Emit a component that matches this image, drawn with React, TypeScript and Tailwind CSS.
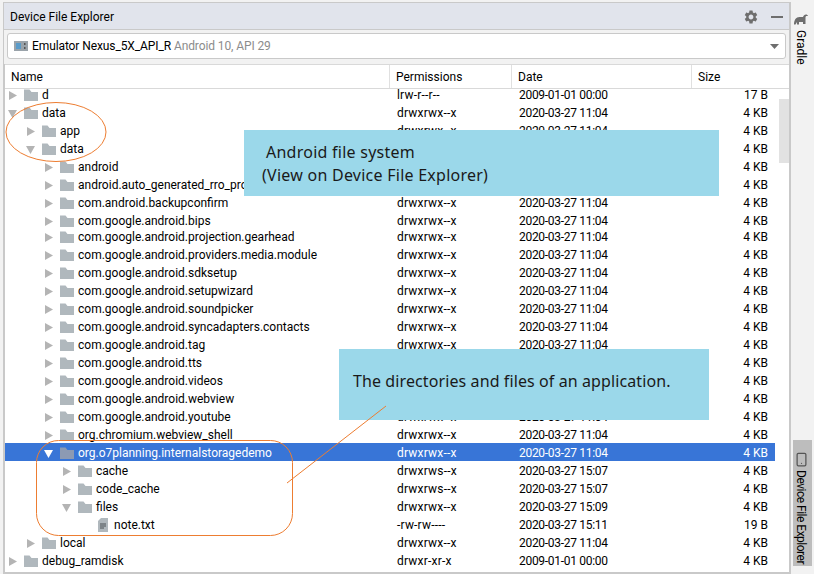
import { Smartphone } from "lucide-react";
import { MdSettings } from "react-icons/md";

type Row = {
  depth: number;
  name: string;
  perm?: string;
  date?: string;
  size?: string;
  open?: boolean;
  leaf?: boolean;
  selected?: boolean;
};

const rows: Row[] = [
  { depth: 0, name: "d", perm: "lrw-r--r--", date: "2009-01-01 00:00", size: "17 B" },
  { depth: 0, name: "data", open: true },
  { depth: 1, name: "app" },
  { depth: 1, name: "data", open: true },
  { depth: 2, name: "android" },
  { depth: 2, name: "android.auto_generated_rro_product__" },
  { depth: 2, name: "com.android.backupconfirm" },
  { depth: 2, name: "com.google.android.bips" },
  { depth: 2, name: "com.google.android.projection.gearhead" },
  { depth: 2, name: "com.google.android.providers.media.module" },
  { depth: 2, name: "com.google.android.sdksetup" },
  { depth: 2, name: "com.google.android.setupwizard" },
  { depth: 2, name: "com.google.android.soundpicker" },
  { depth: 2, name: "com.google.android.syncadapters.contacts" },
  { depth: 2, name: "com.google.android.tag" },
  { depth: 2, name: "com.google.android.tts" },
  { depth: 2, name: "com.google.android.videos" },
  { depth: 2, name: "com.google.android.webview" },
  { depth: 2, name: "com.google.android.youtube" },
  { depth: 2, name: "org.chromium.webview_shell" },
  { depth: 2, name: "org.o7planning.internalstoragedemo", open: true, selected: true },
  { depth: 3, name: "cache", perm: "drwxrws--x", date: "2020-03-27 15:07" },
  { depth: 3, name: "code_cache", perm: "drwxrws--x", date: "2020-03-27 15:07" },
  { depth: 3, name: "files", open: true, date: "2020-03-27 15:09" },
  { depth: 4, name: "note.txt", leaf: true, perm: "-rw-rw----", date: "2020-03-27 15:11", size: "19 B" },
  { depth: 1, name: "local" },
  { depth: 0, name: "debug_ramdisk", perm: "drwxr-xr-x", date: "2009-01-01 00:00" },
];

function Folder({ selected }: { selected?: boolean }) {
  return (
    <svg width="14" height="12" viewBox="0 0 14 12" className="shrink-0">
      <path d="M0 0.5h5.5l2 2.5H14v9H0z" fill={selected ? "#8c9ab3" : "#b0b8bd"} />
    </svg>
  );
}

function TextFile() {
  return (
    <svg width="10" height="14" viewBox="0 0 10 14" className="shrink-0">
      <path d="M3 0h7v14H0V3z" fill="#b0b8bd" />
      <path d="M2 6h6M2 8h6M2 10h4" stroke="#4a5055" strokeWidth="1" />
    </svg>
  );
}

function Arrow({ open, selected }: { open?: boolean; selected?: boolean }) {
  const fill = selected ? "#ffffff" : "#b4b4b4";
  return (
    <svg width="9" height="9" viewBox="0 0 9 9" className="shrink-0">
      <path d={open ? "M0 1h9L4.5 9z" : "M1 0l8 4.5L1 9z"} fill={fill} />
    </svg>
  );
}

function TreeRow({ row, slip }: { row: Row; slip?: boolean }) {
  const left = 3 + row.depth * 18;
  return (
    <div
      className={`flex h-[18px] w-[770px] items-center ${slip ? "-mt-[2px]" : ""} ${
        row.selected ? "-mt-[1px] mb-[1px] bg-[#3875d7] pt-[2px] text-white" : "text-black"
      }`}
    >
      <div className="flex w-[392px] shrink-0 items-center overflow-hidden whitespace-nowrap" style={{ paddingLeft: left }}>
        <div className="flex w-[16px] shrink-0 items-center">{!row.leaf && <Arrow open={row.open} selected={row.selected} />}</div>
        {row.leaf ? (
          <div className="ml-[2px] mr-[6px]">
            <TextFile />
          </div>
        ) : (
          <div className="mr-[4px]">
            <Folder selected={row.selected} />
          </div>
        )}
        <span>{row.name}</span>
      </div>
      <div className="w-[122px] shrink-0 tracking-[0.2px]">{row.perm ?? "drwxrwx--x"}</div>
      <div className="w-[180px] shrink-0 tracking-[-0.3px]">{row.date ?? "2020-03-27 11:04"}</div>
      <div className="w-[76px] shrink-0 pr-[7px] text-right">{row.size ?? "4 KB"}</div>
    </div>
  );
}

function HeaderCell({ label, width }: { label: string; width: string }) {
  return <div className={`flex h-full items-center border-r border-[#e0e0e0] pl-[6px] ${width}`}>{label}</div>;
}

export default function App() {
  return (
    <div className="relative flex h-[574px] w-[814px] overflow-hidden bg-[#f2f2f2] pt-[2px] font-['Roboto',sans-serif] text-[12px] text-black">
      <div className="ml-[3px] flex w-[788px] shrink-0 flex-col border-t border-r-[2px] border-b-[2px] border-l border-[#c9c9c9]">
        <div className="flex h-[26px] shrink-0 items-center justify-between bg-[#e1e4ec] pt-[1px] pr-[6px] pl-[6px]">
          <span>Device File Explorer</span>
          <div className="flex items-center gap-[12px] text-[#6e6e6e]">
            <MdSettings size={16} />
            <div className="h-[2px] w-[12px] bg-[#6e6e6e]" />
          </div>
        </div>
        <div className="h-[35px] shrink-0 border-t border-[#c9c9c9] p-[3px]">
          <div className="flex h-[26px] items-center justify-between rounded-[3px] border border-[#c9c9c9] bg-white pr-[6px] pl-[6px]">
            <div className="flex items-center gap-[4px]">
              <svg width="14" height="10" viewBox="0 0 14 10">
                <rect width="14" height="10" fill="#9aa3aa" />
                <rect x="2" y="2" width="5" height="6" fill="#5a9bc9" />
                <rect x="10" y="2" width="1.5" height="2" fill="#555" />
                <rect x="10" y="6" width="1.5" height="2" fill="#555" />
              </svg>
              <span className="tracking-[-0.1px]">
                Emulator Nexus_5X_API_R <span className="text-[#8c8c8c]">Android 10, API 29</span>
              </span>
            </div>
            <svg width="9" height="5" viewBox="0 0 9 5">
              <path d="M0 0h9L4.5 5z" fill="#6e6e6e" />
            </svg>
          </div>
        </div>
        <div className="relative min-h-0 flex-1 border-l border-[#c9c9c9] bg-white">
          <div className="flex h-[25px] items-center border-y border-[#d9d9d9] bg-white">
            <HeaderCell label="Name" width="w-[385px]" />
            <HeaderCell label="Permissions" width="w-[122px]" />
            <HeaderCell label="Date" width="w-[180px]" />
            <div className="pl-[6px]">Size</div>
          </div>
          <div className="h-[483px] overflow-hidden">
            <div className="-mt-[3px]">
              {rows.map((row, i) => (
                <TreeRow key={i} row={row} slip={i === 8} />
              ))}
            </div>
          </div>
          <div className="absolute top-[35px] right-0 h-[64px] w-[10px] bg-[#e2e2e2]" />
        </div>
      </div>

      <div className="flex flex-1 flex-col">
        <div className="flex w-[19px] flex-col items-center pt-[12px]">
          <svg width="14" height="11" viewBox="0 0 14 11">
            <path d="M0 10.500C0 6 2 3 5.500 3H9c0.500-1.500 1.500-2.500 3-2.500 1 0 1.500 0.500 2 1.500h-1.500c-0.500 0-1 0.500-1 1.500v6.500H9V8H5v2.500H3V8l-1.500 2.500z" fill="#6e6e6e" />
          </svg>
          <span className="mt-[5px] [writing-mode:vertical-rl]">Gradle</span>
        </div>
        <div className="mt-auto mr-[2px] mb-[8px] ml-[2px] flex h-[126px] flex-col bg-[#bdbdbd] pt-[12px]">
          <div className="flex w-[16px] flex-col items-center">
            <Smartphone size={15} color="#555" />
            <span className="mt-[3px] whitespace-nowrap tracking-[-0.5px] [writing-mode:vertical-rl]">Device File Explorer</span>
          </div>
        </div>
      </div>

      <div className="absolute top-[130px] left-[244px] h-[66px] w-[475px] bg-[#9bd8ea] pt-[11px] pl-[22px] font-['Noto_Sans',sans-serif] text-[16px] leading-[23px] tracking-[0.25px] text-[#1a1a1a]">
        <div>Android file system</div>
        <div className="-ml-[4px]">(View on Device File Explorer)</div>
      </div>
      <div className="absolute top-[349px] left-[339px] h-[71px] w-[370px] bg-[#9bd8ea] pt-[20px] pl-[14px] font-['Noto_Sans',sans-serif] text-[16px] tracking-[0.1px] text-[#1a1a1a]">
        The directories and files of an application.
      </div>

      <svg className="pointer-events-none absolute top-0 left-0" width="814" height="574" fill="none" stroke="#ed7d31" strokeWidth="1">
        <ellipse cx="56" cy="132" rx="50" ry="29.500" />
        <rect x="36.500" y="440.500" width="256" height="95" rx="22" />
        <path d="M386 406L287 483" />
      </svg>
    </div>
  );
}
